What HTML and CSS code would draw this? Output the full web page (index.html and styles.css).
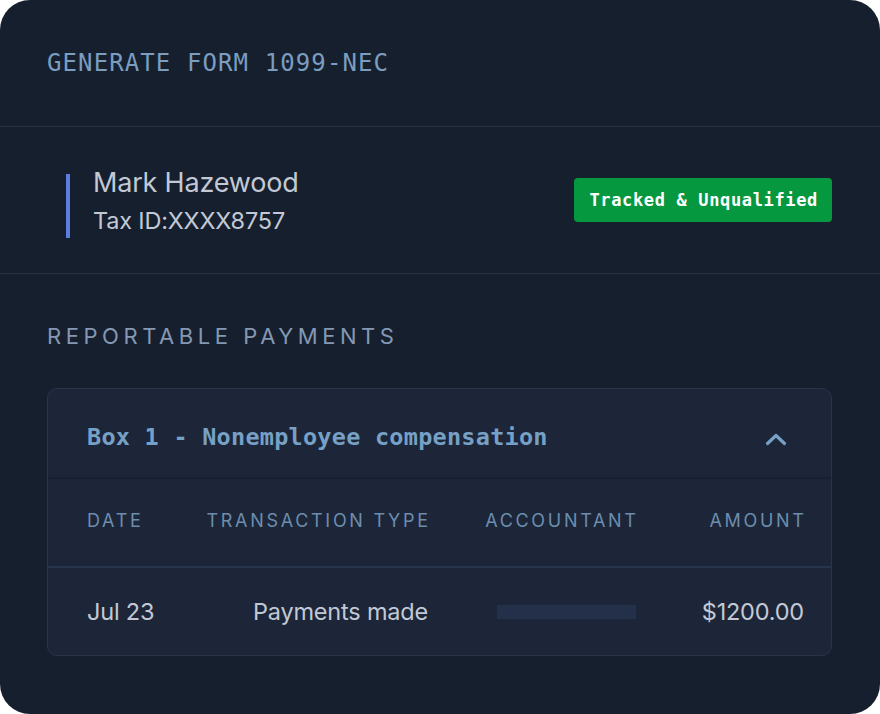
FILE: index.html
```html
<!DOCTYPE html>
<html>
<head>
<meta charset="utf-8">
<link rel="stylesheet" href="styles.css">
</head>
<body>
<div class="card">
  <header class="card-head">
    <h1 class="title">GENERATE FORM 1099-NEC</h1>
  </header>
  <section class="payee">
    <div class="payee-info">
      <div class="payee-name">Mark Hazewood</div>
      <div class="payee-tax">Tax ID:XXXX8757</div>
    </div>
    <span class="badge">Tracked &amp; Unqualified</span>
  </section>
  <section class="payments">
    <h2 class="section-label">REPORTABLE PAYMENTS</h2>
    <div class="box">
      <div class="box-head">
        <span class="box-title">Box 1 - Nonemployee compensation</span>
        <svg class="chev" width="22" height="14" viewBox="0 0 22 14"><path d="M2.5 11.5 L11 3.5 L19.5 11.5" fill="none" stroke="#77a0c6" stroke-width="3.2" stroke-linecap="round" stroke-linejoin="round"/></svg>
      </div>
      <div class="row row-head">
        <span class="c-date">DATE</span>
        <span class="c-type">TRANSACTION TYPE</span>
        <span class="c-acc">ACCOUNTANT</span>
        <span class="c-amt">AMOUNT</span>
      </div>
      <div class="row row-data">
        <span class="c-date">Jul 23</span>
        <span class="c-type">Payments made</span>
        <span class="c-acc"><span class="placeholder"></span></span>
        <span class="c-amt">$1200.00</span>
      </div>
    </div>
  </section>
</div>
</body>
</html>
```
FILE: styles.css
```css
html, body { margin: 0; padding: 0; background: #ffffff; }
.card {
  width: 880px;
  height: 714px;
  box-sizing: border-box;
  background: #161f2e;
  border-radius: 30px;
  overflow: hidden;
  font-family: Inter, "Noto Sans", sans-serif;
}
.card-head {
  height: 126px;
  display: flex;
  align-items: center;
  padding: 0 47px;
  border-bottom: 1px solid #263142;
}
.title {
  margin: 0;
  font-family: "DejaVu Sans Mono", "Liberation Mono", monospace;
  font-weight: 400;
  font-size: 24px;
  letter-spacing: 1.1px;
  color: #7a9dc0;
}
.payee {
  height: 134px;
  padding: 12px 48px 0 66px;
  display: flex;
  align-items: center;
  justify-content: space-between;
  border-bottom: 1px solid #263142;
}
.payee-info {
  border-left: 4px solid #5b7fe0;
  padding: 0 0 0 23px;
  height: 64px;
  box-sizing: border-box;
}
.payee-name {
  font-size: 27px;
  color: #c2c9d5;
  line-height: 32px;
  letter-spacing: -0.2px;
  margin-top: -7px;
}
.payee-tax {
  font-size: 23.5px;
  color: #c2c9d5;
  line-height: 28px;
  letter-spacing: -0.2px;
  margin-top: 8px;
}
.badge {
  background: #05983f;
  color: #ffffff;
  font-family: "DejaVu Sans Mono", "Liberation Mono", monospace;
  font-weight: 700;
  font-size: 17px;
  letter-spacing: 0.65px;
  height: 44px;
  padding: 0 14px 0 15px;
  display: flex;
  align-items: center;
  border-radius: 4px;
  margin-bottom: 12px;
}
.payments {
  padding: 48px 48px 0 47px;
}
.section-label {
  margin: 0 0 38px;
  font-weight: 400;
  font-size: 22px;
  line-height: 28px;
  letter-spacing: 4.55px;
  color: #8598b3;
}
.box {
  background: #1c2638;
  border: 1px solid #2a3447;
  border-radius: 10px;
  overflow: hidden;
}
.box-head {
  height: 80px;
  padding: 8px 44px 0 39px;
  display: flex;
  align-items: center;
  justify-content: space-between;
  border-bottom: 2px solid #172030;
}
.box-title {
  font-family: "DejaVu Sans Mono", "Liberation Mono", monospace;
  font-weight: 700;
  font-size: 23.5px;
  letter-spacing: 0.25px;
  color: #77a0c6;
}
.chev { display: block; margin-top: 4px; }
.row {
  display: grid;
  grid-template-columns: 100px 241px 208px 1fr;
  align-items: center;
  padding: 0 27px 0 39px;
}
.row-head {
  height: 87px;
  border-bottom: 2px solid #283449;
  font-size: 18px;
  letter-spacing: 2.7px;
  color: #6c8dae;
}
.row-head span { padding-bottom: 4px; }
.row-data {
  height: 87px;
  font-size: 23.5px;
  color: #c2c9d5;
  letter-spacing: -0.2px;
}
.c-date { text-align: left; }
.c-type, .c-acc, .c-amt { text-align: right; }
.row-head .c-type, .row-head .c-acc, .row-head .c-amt { margin-right: -2.7px; }
.c-acc { display: flex; justify-content: flex-end; }
.placeholder {
  display: block;
  width: 139px;
  height: 14px;
  background: #243049;
}
```
